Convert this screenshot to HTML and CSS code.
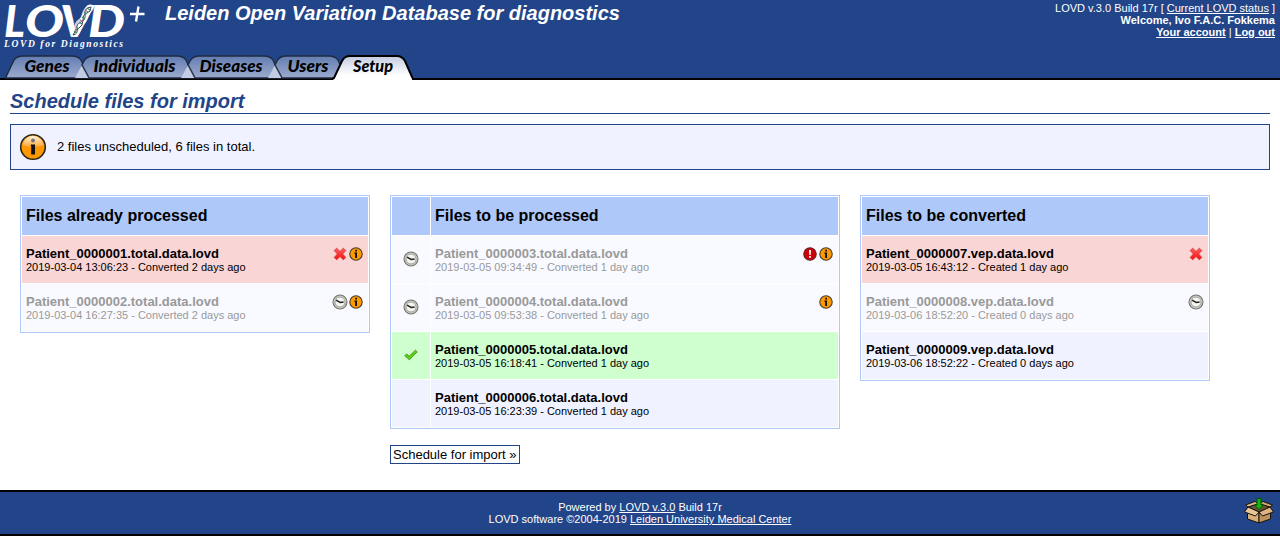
FILE: index.html
```html
<!DOCTYPE html>
<html lang="en">
<head>
<meta charset="utf-8">
<title>Schedule files for import</title>
<link rel="stylesheet" href="styles.css">
</head>
<body>
<svg class="defs" aria-hidden="true">
  <defs>
    <linearGradient id="tab" x1="0" y1="0" x2="0" y2="1"><stop offset="0" stop-color="#637db0"/><stop offset="1" stop-color="#9cabcf"/></linearGradient>
    <linearGradient id="tabon" x1="0" y1="0" x2="0" y2="1"><stop offset="0" stop-color="#c3cbe0"/><stop offset=".8" stop-color="#fff"/></linearGradient>
    <linearGradient id="shine" x1="0" y1="0" x2="0" y2="1"><stop offset="0" stop-color="#fff3df"/><stop offset="1" stop-color="#ffa632"/></linearGradient>
    <linearGradient id="red" x1="0" y1="0" x2="0" y2="1"><stop offset="0" stop-color="#ff6060"/><stop offset="1" stop-color="#f40d0d"/></linearGradient>
    <symbol id="clock" viewBox="0 0 16 16">
      <circle cx="8" cy="8" r="7" fill="#c9cbc4" stroke="#73766f" stroke-width="1.1"/>
      <circle cx="8" cy="8" r="5" fill="#f4f4f0" stroke="#a2a59e"/>
      <path d="M4 6.200 8.200 8.500 11.600 8" fill="none" stroke="#222" stroke-width="1.5"/>
    </symbol>
    <symbol id="info" viewBox="0 0 14 14">
      <circle cx="7" cy="7" r="6.2" fill="#ff9900" stroke="#4b3c27" stroke-width="1.1"/>
      <path d="M6.200 2.800h1.800v1.600H6.200zM5.400 5.600H8v5.400H6.200V6.800h-.8z" fill="#111"/>
    </symbol>
    <symbol id="error" viewBox="0 0 14 14">
      <circle cx="7" cy="7" r="6.2" fill="#d0000a" stroke="#64201f" stroke-width="1.1"/>
      <path d="M6 2.9h2L7.7 8H6.3zM6.1 9.1h1.8v1.7H6.1z" fill="#fff"/>
    </symbol>
    <symbol id="cross" viewBox="0 0 14 14">
      <path d="M3.6 1.2 7 4.4 10.4 1.2 12.8 3.6 9.6 7 12.8 10.4 10.4 12.8 7 9.6 3.6 12.8 1.2 10.4 4.4 7 1.2 3.6Z" fill="url(#red)" stroke="#dc2e2e" stroke-width=".8"/>
    </symbol>
    <symbol id="check" viewBox="0 0 14 12">
      <path d="M.8 6.8 2.6 5 5.2 7.2 11.4 1.2 13.2 2.9 5.4 10.8Z" fill="#5fd312" stroke="#35880b" stroke-width=".8"/>
    </symbol>
  </defs>
</svg>

<header class="top">
  <div class="banner">
    <svg class="logo" viewBox="0 0 150 54" role="img" aria-label="LOVD+">
      <g class="logo-name">
        <text x="4" y="37" textLength="21" lengthAdjust="spacingAndGlyphs">L</text>
        <text x="25" y="37" textLength="39" lengthAdjust="spacingAndGlyphs">O</text>
        <text x="60" y="37" textLength="32" lengthAdjust="spacingAndGlyphs">V</text>
        <text x="88" y="37" textLength="37" lengthAdjust="spacingAndGlyphs">D</text>
      </g>
      <path class="halo" d="M74 33C81 31 75 25 81 22S83 12 90 8"/>
      <path class="strand" d="M73 35Q78 34 77 29T81 22T85 14T91 7"/>
      <path class="strand" d="M73 35Q73 30 77 29T81 22T85 14T91 7" transform="rotate(180 82 21)"/>
      <path class="rungs" d="M74 31l3 2M76 27l3 2M79 22l3 2M82 17l3 2M84 12l3 2M87 8l3 2"/>
      <path class="rungs pink" d="M75 29l3 2M80 20l3 2M85 10l3 2"/>
      <path class="plus" d="M130 14h14.500M138.500 6.500l-2.500 15"/>
      <text class="logo-sub" x="4" y="46.500" textLength="119">LOVD for Diagnostics</text>
    </svg>
    <h1 class="site">Leiden Open Variation Database for diagnostics</h1>
    <div class="user">
      LOVD v.3.0 Build 17r [ <a href="#">Current LOVD status</a> ]<br>
      <b>Welcome, Ivo F.A.C. Fokkema</b><br>
      <a href="#"><b>Your account</b></a> | <a href="#"><b>Log out</b></a>
    </div>
  </div>
  <nav class="tabs">
    <a href="#"><svg width="84" height="26"><path class="tab" d="M.5 24 9 6Q12 2 18 2H67Q73 2 76 6L84 24Z"/><text x="19.500" y="18" textLength="45" lengthAdjust="spacingAndGlyphs">Genes</text></svg></a>
    <a href="#"><svg width="120" height="26"><path class="tab" d="M8 11 10 7Q13 2 19 2H103Q109 2 112 6L120 24H15Z"/><path class="fold" d="M8 11 1 24H15Z"/><path class="line" d="M8 11 15 24"/><text x="19.500" y="18" textLength="82" lengthAdjust="spacingAndGlyphs">Individuals</text></svg></a>
    <a href="#"><svg width="101" height="26"><path class="tab" d="M8 11 10 7Q13 2 19 2H84Q90 2 93 6L101 24H15Z"/><path class="fold" d="M8 11 1 24H15Z"/><path class="line" d="M8 11 15 24"/><text x="19.500" y="18" textLength="63" lengthAdjust="spacingAndGlyphs">Diseases</text></svg></a>
    <a href="#"><svg width="84" height="26"><path class="tab" d="M8 11 10 7Q13 2 19 2H62Q68 2 71 6L78 22V24H15Z"/><path class="fold" d="M8 11 1 24H15Z"/><path class="line" d="M8 11 15 24"/><text x="20.500" y="18" textLength="41" lengthAdjust="spacingAndGlyphs">Users</text></svg></a>
    <a href="#" class="current"><svg width="82" height="26"><path class="on" d="M1 26 10 7Q12.500 2 18 2H65Q70 2 73 7L80 22V26Z"/><path class="edge" d="M0 25 2 24 10 7Q12.500 2 18 2H65Q70 2 73 7L80.500 24"/><text x="21" y="18" textLength="40" lengthAdjust="spacingAndGlyphs">Setup</text></svg></a>
  </nav>
</header>

<main class="content">
  <h2 class="title">Schedule files for import</h2>
  <div class="notice">
    <svg width="28" height="28" viewBox="0 0 28 28"><circle cx="14" cy="14" r="12.300" fill="#ff9800" stroke="#2a271c" stroke-width="1.600"/><path d="M3.500 12a10.600 10.600 0 0 1 21 0Q14 16 3.500 12Z" fill="url(#shine)"/><circle cx="14" cy="7.500" r="2" fill="#777"/><path d="M11.800 11.500H16v10h-3.800v-8.500h-.4z" fill="#111"/></svg>
    <span>2 files unscheduled, 6 files in total.</span>
  </div>

  <div class="lists">
    <section class="list side">
      <div class="row head"><h3 class="cell">Files already processed</h3></div>
      <div class="row bad"><div class="cell"><div><b>Patient_0000001.total.data.lovd</b><small>2019-03-04 13:06:23 - Converted 2 days ago</small></div><span class="icons"><svg class="i14"><use href="#cross"/></svg><svg class="i14"><use href="#info"/></svg></span></div></div>
      <div class="row off"><div class="cell"><div><b>Patient_0000002.total.data.lovd</b><small>2019-03-04 16:27:35 - Converted 2 days ago</small></div><span class="icons tight"><svg class="i16"><use href="#clock"/></svg><svg class="i14"><use href="#info"/></svg></span></div></div>
    </section>

    <div class="middle">
      <section class="list">
        <div class="row head"><div class="mark"></div><h3 class="cell">Files to be processed</h3></div>
        <div class="row off"><div class="mark"><svg class="i16"><use href="#clock"/></svg></div><div class="cell"><div><b>Patient_0000003.total.data.lovd</b><small>2019-03-05 09:34:49 - Converted 1 day ago</small></div><span class="icons"><svg class="i14"><use href="#error"/></svg><svg class="i14"><use href="#info"/></svg></span></div></div>
        <div class="row off"><div class="mark"><svg class="i16"><use href="#clock"/></svg></div><div class="cell"><div><b>Patient_0000004.total.data.lovd</b><small>2019-03-05 09:53:38 - Converted 1 day ago</small></div><span class="icons"><svg class="i14"><use href="#info"/></svg></span></div></div>
        <div class="row good"><div class="mark"><svg class="tick"><use href="#check"/></svg></div><div class="cell"><div><b>Patient_0000005.total.data.lovd</b><small>2019-03-05 16:18:41 - Converted 1 day ago</small></div></div></div>
        <div class="row"><div class="mark"></div><div class="cell"><div><b>Patient_0000006.total.data.lovd</b><small>2019-03-05 16:23:39 - Converted 1 day ago</small></div></div></div>
      </section>
      <button class="submit" type="button">Schedule for import »</button>
    </div>

    <section class="list side">
      <div class="row head"><h3 class="cell">Files to be converted</h3></div>
      <div class="row bad"><div class="cell"><div><b>Patient_0000007.vep.data.lovd</b><small>2019-03-05 16:43:12 - Created 1 day ago</small></div><span class="icons"><svg class="i14"><use href="#cross"/></svg></span></div></div>
      <div class="row off"><div class="cell"><div><b>Patient_0000008.vep.data.lovd</b><small>2019-03-06 18:52:20 - Created 0 days ago</small></div><span class="icons last"><svg class="i16"><use href="#clock"/></svg></span></div></div>
      <div class="row"><div class="cell"><div><b>Patient_0000009.vep.data.lovd</b><small>2019-03-06 18:52:22 - Created 0 days ago</small></div></div></div>
    </section>
  </div>
</main>

<footer class="foot">
  <span></span>
  <p>Powered by <a href="#">LOVD v.3.0</a> Build 17r<br>LOVD software ©2004-2019 <a href="#">Leiden University Medical Center</a></p>
  <svg class="box" width="32" height="32" viewBox="0 0 32 32" stroke="#17130c" stroke-linejoin="round">
    <path d="M5 13 16 9 27 13 16 18Z" fill="#6b5134"/>
    <path d="M4.500 15 16 19V29L4.500 25Z" fill="#d9ae7b"/>
    <path d="M27.500 15 16 19V29L27.500 25Z" fill="#bd925e"/>
    <path d="M5 13 16 18 12.500 22 1.500 18Z" fill="#eac596"/>
    <path d="M27 13 16 18 19.500 22 30.500 18Z" fill="#dcb382"/>
    <path d="M5 13 2.500 11 12 7.500 16 9.500Z" fill="#e0b98a"/>
    <path d="M27 13 29.500 11 20 7.500 16 9.500Z" fill="#d3a773"/>
    <path d="M14 4.500h4V11h2.500L16 15.500 11.500 11H14Z" fill="#0cb80c" stroke="#065206"/>
  </svg>
</footer>
</body>
</html>
```
FILE: styles.css
```css
* { box-sizing: border-box; }
body { margin: 0; height: 536px; display: flex; flex-direction: column; background: #fff; color: #000; font: 13px/15px "Liberation Sans", Arial, sans-serif; }
a { color: inherit; }
svg { display: block; flex: none; }
h1, h2, h3, p { margin: 0; }
.defs { position: absolute; width: 0; height: 0; }

.top { height: 80px; background: #224488; color: #fff; border-bottom: 2px solid #000; display: flex; flex-direction: column; justify-content: space-between; }
.banner { display: flex; height: 54px; }
.logo { width: 150px; height: 54px; overflow: visible; }
.logo-name { font: italic 900 44px Lato, sans-serif; fill: #fff; }
.logo-sub { font: italic bold 9.5px "Liberation Serif", serif; fill: #fff; }
.plus { stroke: #fff; stroke-width: 2.4; fill: none; }
.halo { stroke: #fff; stroke-width: 7; fill: none; stroke-linecap: round; opacity: .75; }
.strand { stroke: #34465f; stroke-width: 1; fill: none; }
.rungs { stroke: #3c9067; stroke-width: 1.2; }
.pink { stroke: #b0607c; }
.site { flex: 1; padding: 2px 0 0 15px; font: italic bold 20px/23px "Liberation Sans", Arial, sans-serif; }
.user { padding: 2px 5px 0 0; font-size: 11px; line-height: 12px; text-align: right; }

.tabs { display: flex; height: 24px; padding-left: 5px; font: italic 900 16px Lato, sans-serif; }
.tabs a { height: 26px; color: #000; }
.tabs a + a { margin-left: -14px; }
.tabs a:nth-child(2) { margin-left: -15.5px; }
.tabs a.current { margin-left: -18.5px; }
.tab { fill: url(#tab); stroke: #202a40; stroke-width: 1.4; }
.fold { fill: #c3cde2; }
.line { fill: none; stroke: #303a52; stroke-width: 1.5; }
.on { fill: url(#tabon); }
.edge { fill: none; stroke: #000; stroke-width: 2; }

.content { flex: 1; padding: 9px 10px 0; }
.title { height: 25px; border-bottom: 1px solid #224488; color: #224488; font: italic bold 20px/24px "Liberation Sans", Arial, sans-serif; }
.notice { height: 46px; margin-top: 10px; padding: 0 8px; border: 1px solid #224488; background: #f0f2ff; display: flex; align-items: center; gap: 10px; }
.notice span { padding-bottom: 2px; }

.lists { display: flex; align-items: flex-start; gap: 20px; padding: 25px 10px 0; }
.list { border: 1px solid #afc8fa; padding: 1px; display: flex; flex-direction: column; gap: 1px; }
.side { width: 350px; }
.middle { width: 450px; }
.row { display: flex; gap: 1px; height: 47px; --fill: #f0f2ff; }
.row > * { background: var(--fill); }
.head { height: 38px; --fill: #afc8fa; }
.bad { --fill: #f9d5d5; }
.good { --fill: #cfffcf; }
.off { --fill: #f9faff; color: #999; }
.cell { flex: 1; padding: 10px 5px 0 4px; display: flex; justify-content: space-between; }
h3.cell { padding-top: 0; font-size: 16px; line-height: 37px; }
.cell b, .cell small { display: block; }
.cell small { font-size: 11px; line-height: 12px; }
.mark { width: 38px; display: flex; align-items: center; justify-content: center; padding-right: 1px; }
.mark svg { margin-top: -2px; }
.mark .tick { margin: -1px 0 0 1px; }
.icons { display: flex; align-items: center; gap: 2px; height: 16px; }
.icons.tight { gap: 1px; }
.icons.last { margin-right: -1px; }
.i14 { width: 14px; height: 14px; }
.i16 { width: 16px; height: 16px; }
.tick { width: 14px; height: 12px; }
.submit { display: block; width: 130px; height: 19px; margin-top: 16px; padding: 0 2px; border: 1px solid #224488; background: #fff; color: #000; font: 13px/17px "Liberation Sans", Arial, sans-serif; text-align: left; white-space: nowrap; }

.foot { height: 46px; border: solid #000; border-width: 2px 0; background: #224488; color: #fff; display: grid; grid-template-columns: 1fr auto 1fr; align-items: center; font-size: 11px; line-height: 12px; text-align: center; }
.box { justify-self: end; margin: 0 5px 6px 0; }
```
